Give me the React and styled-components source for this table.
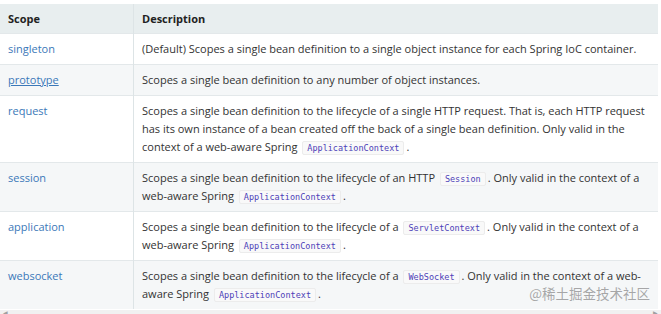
import React from 'react'
import styled, {createGlobalStyle} from 'styled-components'

const Global = createGlobalStyle`
    body {
        margin: 0;
        background: #fff;
        font-family: 'Open Sans', 'Liberation Sans', sans-serif;
    }
`

const Page = styled.div`
    position: relative;
    width: 661px;
    height: 314px;
    padding-top: 4px;
    box-sizing: border-box;
    overflow: hidden;
`

const Table = styled.table`
    width: 658px;
    border-collapse: collapse;
    font-size: 11px;
    line-height: 18px;
    color: #333;
`

const Head = styled.th`
    background: #e8eeef;
    color: #222;
    font-weight: 700;
    text-align: left;
    padding: 6px 8px 5px;
    border-left: ${p => (p.first ? 'none' : '1px solid #dde4e6')};
    width: ${p => (p.first ? '117px' : 'auto')};
`

const Row = styled.tr`
    background: ${p => (p.odd ? '#f5f7f8' : '#fff')};
    border-top: 1px solid #e3e8ea;
`

const Cell = styled.td`
    padding: 6px 8px 6px;
    vertical-align: top;
    border-left: ${p => (p.first ? 'none' : '1px solid #dde4e6')};
`

const Link = styled.a`
    color: #3b78b8;
    text-decoration: ${p => (p.hover ? 'underline' : 'none')};
    cursor: pointer;
`

const Code = styled.code`
    font-family: 'DejaVu Sans Mono', 'Liberation Mono', monospace;
    font-size: 8.5px;
    line-height: 12px;
    color: #4d3fb8;
    background: #f9f9f9;
    border: 1px solid #ececec;
    border-radius: 2px;
    padding: 0 4px;
    margin: 0 2px;
    display: inline-block;
`

const Scrollbar = styled.div`
    height: 7px;
    margin-top: 1px;
    background: #f1f1f1;
    display: flex;
    align-items: center;
    justify-content: space-between;
    padding: 0 3px;
    font-size: 6px;
    line-height: 7px;
    color: #a0a0a0;
`

const Watermark = styled.div`
    position: absolute;
    right: 11px;
    bottom: 13px;
    font-family: 'Noto Sans CJK SC', sans-serif;
    font-size: 13.5px;
    line-height: 16px;
    color: rgba(140, 140, 140, 0.75);
`

const rows = [
    {name: 'singleton', text: ['(Default) Scopes a single bean definition to a single object instance for each Spring IoC container.']},
    {name: 'prototype', hover: true, text: ['Scopes a single bean definition to any number of object instances.']},
    {name: 'request', text: ['Scopes a single bean definition to the lifecycle of a single HTTP request. That is, each HTTP request has its own instance of a bean created off the back of a single bean definition. Only valid in the context of a web-aware Spring ', {code: 'ApplicationContext'}, '.']},
    {name: 'session', text: ['Scopes a single bean definition to the lifecycle of an HTTP ', {code: 'Session'}, '. Only valid in the context of a web-aware Spring ', {code: 'ApplicationContext'}, '.']},
    {name: 'application', text: ['Scopes a single bean definition to the lifecycle of a ', {code: 'ServletContext'}, '. Only valid in the context of a web-aware Spring ', {code: 'ApplicationContext'}, '.']},
    {name: 'websocket', text: ['Scopes a single bean definition to the lifecycle of a ', {code: 'WebSocket'}, '. Only valid in the context of a web-aware Spring ', {code: 'ApplicationContext'}, '.']},
]

const App = () => {
  return (
    <Page>
        <Global />
        <Table>
            <thead>
                <tr>
                    <Head first>Scope</Head>
                    <Head>Description</Head>
                </tr>
            </thead>
            <tbody>
                {rows.map((r, i) => (
                    <Row key={r.name} odd={i % 2 === 1}>
                        <Cell first><Link hover={r.hover}>{r.name}</Link></Cell>
                        <Cell>
                            {r.text.map((t, j) => typeof t === 'string' ? t : <Code key={j}>{t.code}</Code>)}
                        </Cell>
                    </Row>
                ))}
            </tbody>
        </Table>
        <Scrollbar><span>◀</span><span>▶</span></Scrollbar>
        <Watermark>@稀土掘金技术社区</Watermark>
    </Page>
  )
}

export default App
